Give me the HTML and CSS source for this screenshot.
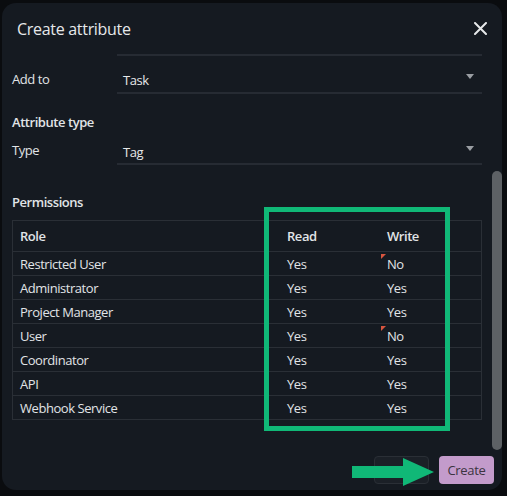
FILE: index.html
```html
<!DOCTYPE html>
<html lang="en">
<head>
    <meta charset="UTF-8">
    <meta name="viewport" content="width=device-width, initial-scale=1.0">
    <title>Create attribute</title>
    <link rel="stylesheet" href="styles.css">
</head>
<body>
    <div class="dialog">
        <div class="header">
            <h1>Create attribute</h1>
            <button class="close" aria-label="Close">
                <svg width="13" height="13" viewBox="0 0 13 13">
                    <path d="M1 1 L12 12 M12 1 L1 12" stroke="#e6e8ea" stroke-width="2" stroke-linecap="round"/>
                </svg>
            </button>
        </div>

        <div class="body">
            <div class="scroll">
                <div class="cut-field"></div>

                <div class="form-row add-row">
                    <label>Add to</label>
                    <div class="select">
                        <span>Task</span>
                        <span class="caret"></span>
                    </div>
                </div>

                <div class="section-title first">Attribute type</div>
                <div class="form-row type-row">
                    <label>Type</label>
                    <div class="select">
                        <span>Tag</span>
                        <span class="caret"></span>
                    </div>
                </div>

                <div class="section-title perms">Permissions</div>
                <table class="perm-table">
                    <thead>
                        <tr><th class="col-role">Role</th><th class="col-read">Read</th><th class="col-write">Write</th></tr>
                    </thead>
                    <tbody>
                        <tr><td>Restricted User</td><td>Yes</td><td class="changed">No</td></tr>
                        <tr><td>Administrator</td><td>Yes</td><td>Yes</td></tr>
                        <tr><td>Project Manager</td><td>Yes</td><td>Yes</td></tr>
                        <tr><td>User</td><td>Yes</td><td class="changed">No</td></tr>
                        <tr><td>Coordinator</td><td>Yes</td><td>Yes</td></tr>
                        <tr><td>API</td><td>Yes</td><td>Yes</td></tr>
                        <tr><td>Webhook Service</td><td>Yes</td><td>Yes</td></tr>
                    </tbody>
                </table>
            </div>
            <div class="scrollbar">
                <div class="thumb"></div>
            </div>
        </div>

        <div class="footer">
            <button class="btn btn-dark"></button>
            <button class="btn btn-create">Create</button>
        </div>

        <div class="highlight"></div>
        <svg class="arrow" width="84" height="30" viewBox="0 0 84 30">
            <path d="M0 9 H51 V1 L82 15 L51 29 V21 H0 Z" fill="#10b877"/>
        </svg>
    </div>
</body>
</html>
```

FILE: styles.css
```css
body {
    margin: 0;
    width: 507px;
    height: 496px;
    background-color: #0a0c0f;
    font-family: "Open Sans", "Noto Sans", sans-serif;
    color: #e1e4e7;
    overflow: hidden;
}
.dialog {
    position: relative;
    margin: 3px 0 0 2px;
    width: 500px;
    height: 487px;
    background-color: #151a21;
    border-radius: 14px;
    display: flex;
    flex-direction: column;
}
.header {
    height: 51px;
    display: flex;
    align-items: center;
    justify-content: space-between;
    padding: 0 15px 0 15px;
}
.header h1 {
    margin: 0;
    font-size: 16px;
    font-weight: 400;
    color: #e6e8ea;
    letter-spacing: -0.3px;
}
.close {
    background: none;
    border: none;
    padding: 0;
    width: 13px;
    height: 13px;
    display: flex;
}
.body {
    flex: 1;
    display: flex;
    min-height: 0;
}
.scroll {
    flex: 1;
    padding: 0 10px 0 10px;
    overflow: hidden;
    letter-spacing: -0.45px;
}
.scrollbar {
    width: 10px;
    display: flex;
    flex-direction: column;
    justify-content: flex-end;
}
.thumb {
    height: 279px;
    background-color: #5d6165;
    border-radius: 5px;
}
.cut-field {
    margin-left: 105px;
    height: 2px;
    background-color: #262b33;
}
.form-row {
    display: flex;
    align-items: flex-start;
    font-size: 13px;
    line-height: 18px;
}
.form-row label {
    width: 105px;
}
.select {
    flex: 1;
    border-bottom: 2px solid #262b33;
    display: flex;
    align-items: center;
    justify-content: space-between;
    padding: 0 8px 0 6px;
    color: #e6e8ea;
}
.add-row label {
    margin-top: 14px;
}
.add-row .select {
    height: 24px;
    padding-top: 12px;
}
.type-row label {
    margin-top: 10px;
}
.type-row .select {
    height: 22px;
    padding-top: 10px;
}
.caret {
    width: 0;
    height: 0;
    border-left: 4px solid transparent;
    border-right: 4px solid transparent;
    border-top: 5px solid #9a9ea3;
    margin-top: -8px;
}
.section-title {
    font-size: 13px;
    font-weight: 600;
    line-height: 18px;
}
.section-title.first {
    margin-top: 19px;
}
.section-title.perms {
    margin-top: 28px;
    margin-bottom: 9px;
}
.perm-table {
    width: 100%;
    border-collapse: collapse;
    font-size: 13px;
    border: 1px solid #2a2f36;
}
.perm-table th {
    text-align: left;
    font-weight: 600;
    height: 30px;
    padding: 0 7px;
    border-bottom: 1px solid #2a2f36;
}
.perm-table td {
    height: 23px;
    padding: 0 7px;
    border-bottom: 1px solid #2a2f36;
}
.col-read {
    width: 86px;
}
.col-write {
    width: 87px;
}
.changed {
    position: relative;
}
.changed::before {
    content: "";
    position: absolute;
    top: 2px;
    left: 1px;
    border-top: 5px solid #d8553f;
    border-right: 5px solid transparent;
}
.footer {
    height: 40px;
    display: flex;
    align-items: center;
    justify-content: flex-end;
    gap: 10px;
    padding: 0 8px 0 0;
}
.btn {
    height: 28px;
    border-radius: 4px;
    font-family: inherit;
    font-size: 13px;
}
.btn-dark {
    width: 55px;
    background-color: #1b2027;
    border: 1px solid #2a2f36;
}
.btn-create {
    width: 55px;
    background-color: #c39bcb;
    border: none;
    color: #3b3440;
    letter-spacing: -0.3px;
}
.highlight {
    position: absolute;
    left: 262px;
    top: 204px;
    width: 176px;
    height: 214px;
    border: 5px solid #10b877;
}
.arrow {
    position: absolute;
    left: 350px;
    top: 454px;
}
```
